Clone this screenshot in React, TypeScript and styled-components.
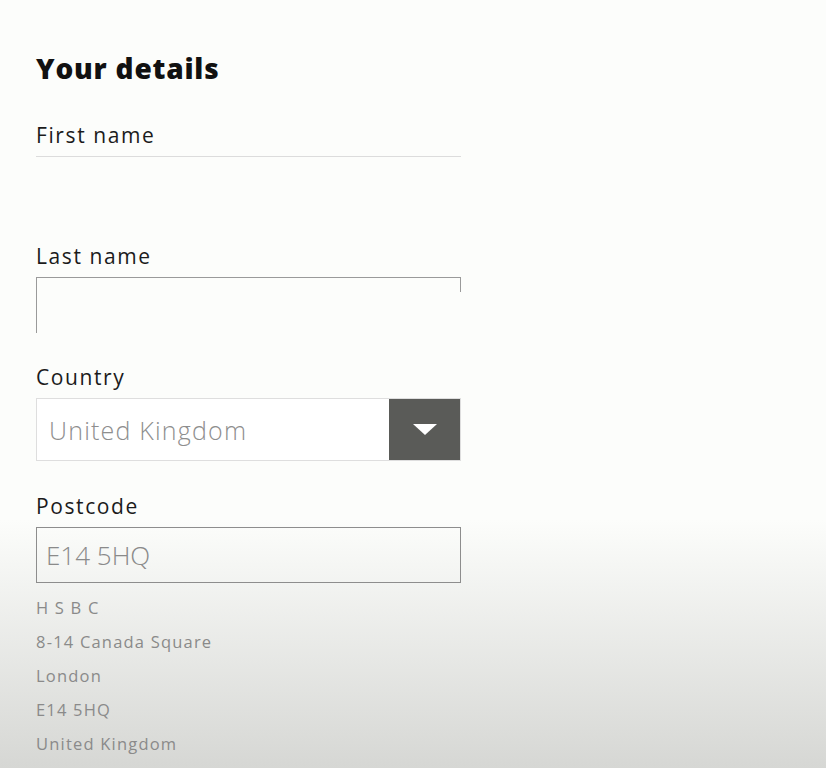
import React from "react";
import styled, { createGlobalStyle } from "styled-components";

const Global = createGlobalStyle`
  html, body { margin: 0; padding: 0; }
  body { font-family: "Open Sans", sans-serif; }
`;

const Page = styled.div`
  min-height: 768px;
  box-sizing: border-box;
  padding: 50px 0 0 36px;
  background: linear-gradient(to bottom, #fcfdfb 0px, #fcfdfb 520px, #d6d7d4 768px);
`;

const Form = styled.div`
  width: 425px;
  display: flex;
  flex-direction: column;
`;

const Heading = styled.h2`
  margin: 0 0 36px;
  font-family: "Open Sans", sans-serif;
  font-weight: 800;
  font-size: 28px;
  line-height: 36px;
  color: #111;
  letter-spacing: 0.8px;
`;

const Field = styled.div<{ $gap: number }>`
  display: flex;
  flex-direction: column;
  margin-bottom: ${(p) => p.$gap}px;
`;

const Label = styled.label`
  font-family: "Open Sans", sans-serif;
  font-size: 21px;
  line-height: 26px;
  letter-spacing: 1.6px;
  color: #1b1b1b;
  margin-bottom: 8px;
`;

const BlankInput = styled.div<{ $variant: "line" | "partial" }>`
  height: 56px;
  box-sizing: border-box;
  border-top: 1px solid ${(p) => (p.$variant === "line" ? "#dcdcdc" : "#9a9a9a")};
  border-left: ${(p) => (p.$variant === "partial" ? "1px solid #9a9a9a" : "none")};
  position: relative;
  &::after {
    content: "";
    display: ${(p) => (p.$variant === "partial" ? "block" : "none")};
    position: absolute;
    right: 0;
    top: 0;
    width: 1px;
    height: 14px;
    background: #9a9a9a;
  }
`;

const Select = styled.div`
  height: 63px;
  box-sizing: border-box;
  border: 1px solid #dedede;
  background: #fff;
  display: flex;
  align-items: stretch;
`;

const SelectValue = styled.div`
  flex: 1;
  display: flex;
  align-items: center;
  padding-left: 12px;
  font-family: "Open Sans", sans-serif;
  font-weight: 300;
  font-size: 25px;
  letter-spacing: 1.2px;
  color: #8e8e8e;
`;

const SelectButton = styled.div`
  width: 71px;
  background: #5a5b58;
  display: flex;
  align-items: center;
  justify-content: center;
`;

const Input = styled.div`
  height: 56px;
  box-sizing: border-box;
  border: 1.5px solid #8d8d8d;
  display: flex;
  align-items: center;
  padding-left: 9px;
  font-family: "Open Sans", sans-serif;
  font-weight: 300;
  font-size: 26px;
  color: #8a8a8a;
`;

const Address = styled.div`
  margin-top: 8px;
  display: flex;
  flex-direction: column;
`;

const AddressLine = styled.div`
  font-family: "Open Sans", sans-serif;
  font-size: 16.5px;
  line-height: 34px;
  letter-spacing: 1.2px;
  color: #8a8a8a;
`;

export default function App() {
  return (
    <>
      <Global />
      <Page>
        <Form>
          <Heading>Your details</Heading>
          <Field $gap={31}>
            <Label>First name</Label>
            <BlankInput $variant="line" />
          </Field>
          <Field $gap={31}>
            <Label>Last name</Label>
            <BlankInput $variant="partial" />
          </Field>
          <Field $gap={32}>
            <Label>Country</Label>
            <Select>
              <SelectValue>United Kingdom</SelectValue>
              <SelectButton>
                <svg width="26" height="13" viewBox="0 0 26 13">
                  <path d="M1 1 L25 1 L13 12 Z" fill="#fff" />
                </svg>
              </SelectButton>
            </Select>
          </Field>
          <Field $gap={0}>
            <Label>Postcode</Label>
            <Input>E14 5HQ</Input>
          </Field>
          <Address>
            <AddressLine>H S B C</AddressLine>
            <AddressLine>8-14 Canada Square</AddressLine>
            <AddressLine>London</AddressLine>
            <AddressLine>E14 5HQ</AddressLine>
            <AddressLine>United Kingdom</AddressLine>
          </Address>
        </Form>
      </Page>
    </>
  );
}
